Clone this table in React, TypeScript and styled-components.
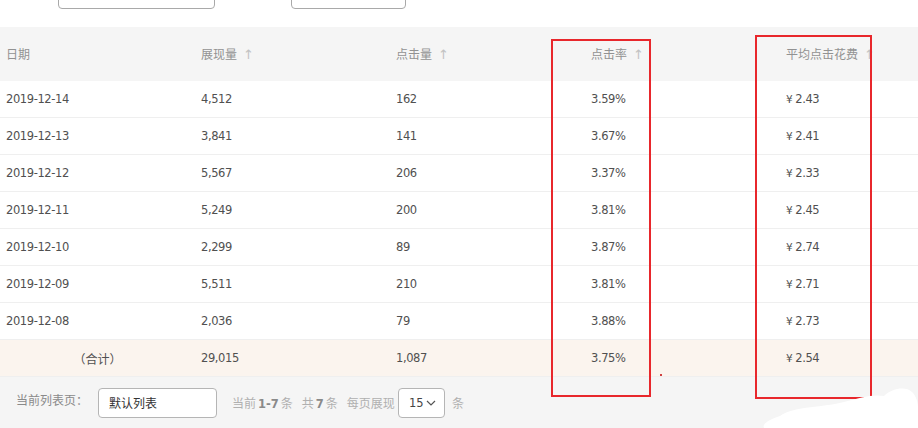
import React from "react";
import styled, { createGlobalStyle } from "styled-components";

const Global = createGlobalStyle`
  html, body { margin: 0; padding: 0; background: #fff; }
  body { font-family: "Noto Sans CJK SC", "Noto Sans", sans-serif; font-size: 12px; color: #444; }
`;

const Page = styled.div`
  position: relative;
  width: 918px;
  height: 428px;
  overflow: hidden;
  background: #fff;
`;

const FilterBar = styled.div`
  display: flex;
  align-items: flex-end;
  height: 30px;
  margin-top: -21px;
`;

const FilterInput = styled.div<{ $left: number; $width: number }>`
  box-sizing: border-box;
  margin-left: ${(p) => p.$left}px;
  width: ${(p) => p.$width}px;
  height: 30px;
  border: 1px solid #a9a9a9;
  border-radius: 4px;
  background: #fff;
`;

const Table = styled.div`
  margin-top: 18px;
  width: 975px;
`;

const Row = styled.div<{ $kind: "head" | "body" | "sum" }>`
  display: grid;
  grid-template-columns: repeat(5, 195px);
  align-items: center;
  box-sizing: border-box;
  height: ${(p) => (p.$kind === "head" ? 54 : 37)}px;
  background: ${(p) => (p.$kind === "head" ? "#f5f5f5" : p.$kind === "sum" ? "#fbf4ee" : "#fff")};
  border-bottom: 1px solid ${(p) => (p.$kind === "head" ? "#f5f5f5" : "#efefef")};
`;

const Cell = styled.div<{ $center?: boolean; $head?: boolean }>`
  padding-left: ${(p) => (p.$center ? 0 : 6)}px;
  text-align: ${(p) => (p.$center ? "center" : "left")};
  font-family: ${(p) =>
    p.$head ? `"Noto Sans CJK SC", sans-serif` : `"DejaVu Sans", "Noto Sans CJK SC", sans-serif`};
  font-size: ${(p) => (p.$head ? 12 : 11.5)}px;
  letter-spacing: ${(p) => (p.$head ? 0 : -0.4)}px;
  color: ${(p) => (p.$head ? "#929292" : "#505050")};
  white-space: nowrap;
`;

const SumLabel = styled(Cell)`
  color: #505050;
`;

const Yen = styled.span`
  font-size: 10.5px;
  margin-right: 3px;
`;

const SortArrow = styled.span`
  color: #c2c2c2;
  margin-left: 6px;
  font-family: "DejaVu Sans", sans-serif;
  font-size: 13px;
`;

const Footer = styled.div`
  display: flex;
  align-items: center;
  height: 51px;
  background: #f5f5f5;
  padding-left: 16px;
  font-size: 12px;
  color: #8a8a8a;
`;

const Label = styled.span`
  width: 82px;
  margin-top: -6px;
`;

const ListInput = styled.div`
  box-sizing: border-box;
  width: 119px;
  height: 30px;
  border: 1px solid #b5b5b5;
  border-radius: 4px;
  background: #fff;
  display: flex;
  align-items: center;
  padding-left: 10px;
  color: #333;
  margin-right: 15px;
`;

const Info = styled.span`
  color: #b0b0b0;
  margin-right: 9px;
  b {
    color: #8a8a8a;
    font-weight: 700;
    font-family: "DejaVu Sans", sans-serif;
    font-size: 11.5px;
    margin: 0 2px;
  }
`;

const Select = styled.div`
  box-sizing: border-box;
  width: 47px;
  height: 30px;
  margin-left: -6px;
  border: 1px solid #b5b5b5;
  border-radius: 4px;
  background: #fff;
  display: flex;
  align-items: center;
  padding-left: 10px;
  gap: 2px;
  color: #444;
  font-family: "DejaVu Sans", sans-serif;
  font-size: 11.5px;
  margin-right: 7px;
`;

const Unit = styled.span`
  color: #b0b0b0;
`;

const Highlight = styled.div<{ $x: number; $y: number; $w: number; $h: number }>`
  position: absolute;
  left: ${(p) => p.$x}px;
  top: ${(p) => p.$y}px;
  width: ${(p) => p.$w}px;
  height: ${(p) => p.$h}px;
  box-sizing: border-box;
  border: 2px solid #e8272c;
  pointer-events: none;
`;

const Dot = styled.div`
  position: absolute;
  left: 660px;
  top: 374px;
  width: 2px;
  height: 2px;
  background: #d04040;
`;

const Blot = styled.svg`
  position: absolute;
  left: 760px;
  top: 386px;
`;

const rows = [
  ["2019-12-14", "4,512", "162", "3.59%", "2.43"],
  ["2019-12-13", "3,841", "141", "3.67%", "2.41"],
  ["2019-12-12", "5,567", "206", "3.37%", "2.33"],
  ["2019-12-11", "5,249", "200", "3.81%", "2.45"],
  ["2019-12-10", "2,299", "89", "3.87%", "2.74"],
  ["2019-12-09", "5,511", "210", "3.81%", "2.71"],
  ["2019-12-08", "2,036", "79", "3.88%", "2.73"],
];

const heads = ["展现量", "点击量", "点击率", "平均点击花费"];

export default function App() {
  return (
    <>
      <Global />
      <Page>
        <FilterBar>
          <FilterInput $left={58} $width={157} />
          <FilterInput $left={76} $width={115} />
        </FilterBar>
        <Table>
          <Row $kind="head">
            <Cell $head>日期</Cell>
            {heads.map((h) => (
              <Cell $head key={h}>
                {h}
                <SortArrow>↑</SortArrow>
              </Cell>
            ))}
          </Row>
          {rows.map((r) => (
            <Row $kind="body" key={r[0]}>
              {r.slice(0, 4).map((c, i) => (
                <Cell key={i}>{c}</Cell>
              ))}
              <Cell>
                <Yen>¥</Yen>
                {r[4]}
              </Cell>
            </Row>
          ))}
          <Row $kind="sum">
            <SumLabel $center $head>（合计）</SumLabel>
            <Cell>29,015</Cell>
            <Cell>1,087</Cell>
            <Cell>3.75%</Cell>
            <Cell>
              <Yen>¥</Yen>2.54
            </Cell>
          </Row>
        </Table>
        <Footer>
          <Label>当前列表页：</Label>
          <ListInput>默认列表</ListInput>
          <Info>
            当前<b>1-7</b>条
          </Info>
          <Info>
            共<b>7</b>条
          </Info>
          <Info>每页展现</Info>
          <Select>
            15
            <svg width="10" height="6" viewBox="0 0 10 6">
              <path d="M1 1l4 4 4-4" fill="none" stroke="#555" strokeWidth="1.2" />
            </svg>
          </Select>
          <Unit>条</Unit>
        </Footer>
        <Highlight $x={551} $y={39} $w={100} $h={358} />
        <Highlight $x={755} $y={35} $w={117} $h={364} />
        <Dot />
        <Blot width="158" height="42" viewBox="0 0 158 42">
          <path
            d="M20 30 C34 20 60 22 84 16 C100 12 112 8 124 10 C132 2 146 0 152 6 C156 10 158 16 158 22 L158 42 L4 42 C2 38 8 34 20 30 Z"
            fill="#fff"
          />
        </Blot>
      </Page>
    </>
  );
}
